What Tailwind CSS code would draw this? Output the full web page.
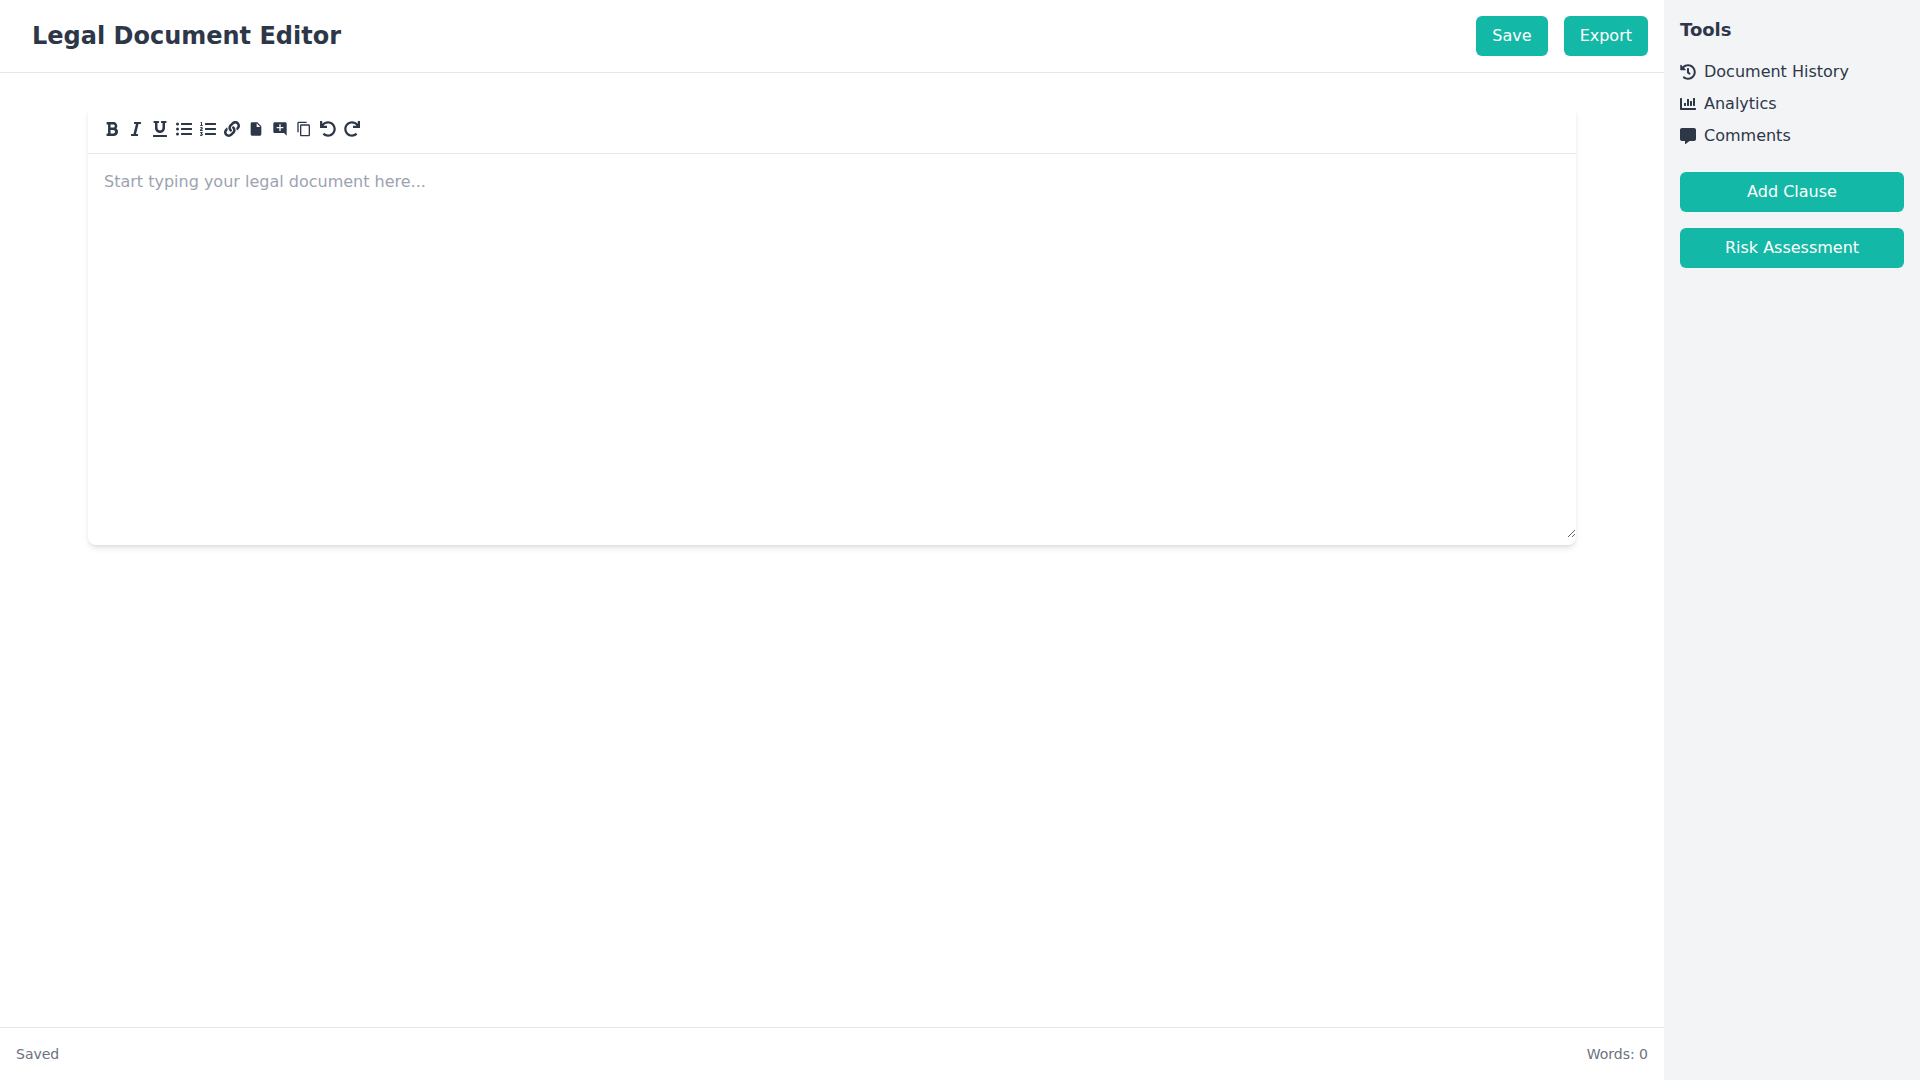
<!DOCTYPE html>
<html lang="en">
  <head>
    <meta charset="UTF-8" />
    <meta name="viewport" content="width=device-width, initial-scale=1.0" />
    <script src="https://cdn.jsdelivr.net/npm/@tailwindcss/browser@4"></script>
    <title>Legal Document Editor</title>
  </head>
  <body class="flex min-h-screen bg-white font-['DejaVu_Sans',sans-serif] text-[#2d3748]">
    <div class="flex min-w-0 flex-1 flex-col">
      <header class="flex items-center justify-between border-b border-[#e5e7eb] p-4">
        <h1 class="ml-4 text-2xl font-bold">Legal Document Editor</h1>
        <div class="flex gap-4">
          <button type="button" class="rounded-md bg-[#14b8a6] px-4 py-2 text-white hover:bg-[#0d9488]">Save</button>
          <button type="button" class="rounded-md bg-[#14b8a6] px-4 py-2 text-white hover:bg-[#0d9488]">Export</button>
        </div>
      </header>

      <main class="mx-auto w-full max-w-[1536px] flex-1 px-6 py-8">
        <div class="rounded-lg bg-white pb-[7px] shadow-md">
          <!-- toolbar -->
          <div class="flex gap-2 border-b border-[#e5e7eb] p-4">
            <button type="button" aria-label="Bold">
              <svg class="size-4" fill="currentColor" viewBox="0 0 384 512"><path d="M333.49 238a122 122 0 0 0 27-65.21C367.87 96.49 308 32 233.42 32H34a16 16 0 0 0-16 16v48a16 16 0 0 0 16 16h31.87v288H34a16 16 0 0 0-16 16v48a16 16 0 0 0 16 16h209.32c70.8 0 134.14-51.75 141-122.4 4.74-48.45-16.39-92.06-50.83-119.6zM145.66 112h87.76a48 48 0 0 1 0 96h-87.76zm87.76 288h-87.76V288h87.76a56 56 0 0 1 0 112z" /></svg>
            </button>
            <button type="button" aria-label="Italic">
              <svg class="size-4" fill="currentColor" viewBox="0 0 320 512"><path d="M320 48v32a16 16 0 0 1-16 16h-62.76l-80 320H208a16 16 0 0 1 16 16v32a16 16 0 0 1-16 16H16a16 16 0 0 1-16-16v-32a16 16 0 0 1 16-16h62.76l80-320H112a16 16 0 0 1-16-16V48a16 16 0 0 1 16-16h192a16 16 0 0 1 16 16z" /></svg>
            </button>
            <button type="button" aria-label="Underline">
              <svg class="size-4" fill="currentColor" viewBox="0 0 448 512"><path d="M32 64h32v160c0 88.22 71.78 160 160 160s160-71.78 160-160V64h32a16 16 0 0 0 16-16V16a16 16 0 0 0-16-16H272a16 16 0 0 0-16 16v32a16 16 0 0 0 16 16h32v160a80 80 0 0 1-160 0V64h32a16 16 0 0 0 16-16V16a16 16 0 0 0-16-16H32a16 16 0 0 0-16 16v32a16 16 0 0 0 16 16zm400 384H16a16 16 0 0 0-16 16v32a16 16 0 0 0 16 16h416a16 16 0 0 0 16-16v-32a16 16 0 0 0-16-16z" /></svg>
            </button>
            <button type="button" aria-label="Bulleted list">
              <svg class="size-4" fill="currentColor" viewBox="0 0 512 512"><path d="M48 48a48 48 0 1 0 48 48 48 48 0 0 0-48-48zm0 160a48 48 0 1 0 48 48 48 48 0 0 0-48-48zm0 160a48 48 0 1 0 48 48 48 48 0 0 0-48-48zm448 16H176a16 16 0 0 0-16 16v32a16 16 0 0 0 16 16h320a16 16 0 0 0 16-16v-32a16 16 0 0 0-16-16zm0-320H176a16 16 0 0 0-16 16v32a16 16 0 0 0 16 16h320a16 16 0 0 0 16-16V80a16 16 0 0 0-16-16zm0 160H176a16 16 0 0 0-16 16v32a16 16 0 0 0 16 16h320a16 16 0 0 0 16-16v-32a16 16 0 0 0-16-16z" /></svg>
            </button>
            <button type="button" aria-label="Numbered list">
              <svg class="size-4" fill="currentColor" viewBox="0 0 512 512"><path d="M61.77 401l17.5-20.15a19.92 19.92 0 0 0 5.07-14.19v-3.31C84.34 356 80.5 352 73 352H16a8 8 0 0 0-8 8v16a8 8 0 0 0 8 8h22.83a157.41 157.41 0 0 0-11 12.31l-5.61 7c-4 5.07-5.25 10.13-2.8 14.88l1.05 1.93c3 5.76 6.29 7.88 12.25 7.88h4.73c10.33 0 15.94 2.44 15.94 9.09 0 4.72-4.2 8.22-14.36 8.22a41.54 41.54 0 0 1-15.47-3.12c-6.49-3.88-11.74-3.5-15.6 3.12l-5.59 9.31c-3.72 6.13-3.19 11.72 2.63 15.94 7.71 4.69 20.38 9.44 37 9.44 34.16 0 48.5-22.75 48.5-44.12-.03-14.38-9.12-29.76-28.73-34.88zM496 224H176a16 16 0 0 0-16 16v32a16 16 0 0 0 16 16h320a16 16 0 0 0 16-16v-32a16 16 0 0 0-16-16zm0-160H176a16 16 0 0 0-16 16v32a16 16 0 0 0 16 16h320a16 16 0 0 0 16-16V80a16 16 0 0 0-16-16zm0 320H176a16 16 0 0 0-16 16v32a16 16 0 0 0 16 16h320a16 16 0 0 0 16-16v-32a16 16 0 0 0-16-16zM16 160h64a8 8 0 0 0 8-8v-16a8 8 0 0 0-8-8H64V40a8 8 0 0 0-8-8H32a8 8 0 0 0-7.14 4.42l-8 16A8 8 0 0 0 24 64h8v64H16a8 8 0 0 0-8 8v16a8 8 0 0 0 8 8zm-3.91 160H80a8 8 0 0 0 8-8v-16a8 8 0 0 0-8-8H41.32c3.29-10.29 48.34-18.68 48.34-56.44 0-29.06-25-39.56-44.47-39.56-21.36 0-33.8 10-40.46 18.75-4.37 5.59-3 10.84 2.8 15.37l8.58 6.88c5.61 4.56 11 2.47 16.12-2.44a13.44 13.44 0 0 1 9.46-3.84c3.33 0 9.28 1.56 9.28 8.75C51 248.19 0 257.31 0 304.59v4C0 316 5.08 320 12.09 320z" /></svg>
            </button>
            <button type="button" aria-label="Insert link">
              <svg class="size-4" fill="currentColor" viewBox="0 0 512 512"><path d="M326.612 185.391c59.747 59.809 58.927 155.698.36 214.59-.11.12-.24.25-.36.37l-67.2 67.2c-59.27 59.27-155.699 59.262-214.96 0-59.27-59.26-59.27-155.7 0-214.96l37.106-37.106c9.84-9.84 26.786-3.3 27.294 10.606.648 17.722 3.826 35.527 9.69 52.721 1.986 5.822.567 12.262-3.783 16.612l-13.087 13.087c-28.026 28.026-28.905 73.66-1.155 101.96 28.024 28.579 74.086 28.749 102.325.51l67.2-67.19c28.191-28.191 28.073-73.757 0-101.83-3.701-3.694-7.429-6.564-10.341-8.569a16.037 16.037 0 0 1-6.947-12.606c-.396-10.567 3.348-21.456 11.698-29.806l21.054-21.055c5.521-5.521 14.182-6.199 20.584-1.731a152.482 152.482 0 0 1 20.522 17.197zM467.547 44.449c-59.261-59.262-155.69-59.27-214.96 0l-67.2 67.2c-.12.12-.25.25-.36.37-58.566 58.892-59.387 154.781.36 214.59a152.454 152.454 0 0 0 20.521 17.196c6.402 4.468 15.064 3.789 20.584-1.731l21.054-21.055c8.35-8.35 12.094-19.239 11.698-29.806a16.037 16.037 0 0 0-6.947-12.606c-2.912-2.005-6.64-4.875-10.341-8.569-28.073-28.073-28.191-73.639 0-101.83l67.2-67.19c28.239-28.239 74.3-28.069 102.325.51 27.75 28.3 26.872 73.934-1.155 101.96l-13.087 13.087c-4.35 4.35-5.769 10.79-3.783 16.612 5.864 17.194 9.042 34.999 9.69 52.721.509 13.906 17.454 20.446 27.294 10.606l37.106-37.106c59.271-59.259 59.271-155.699.001-214.959z" /></svg>
            </button>
            <button type="button" aria-label="Insert file">
              <svg class="size-4" fill="currentColor" viewBox="0 0 24 24"><path d="M6 2c-1.1 0-1.99.9-1.99 2L4 20c0 1.1.89 2 1.99 2H18c1.1 0 2-.9 2-2V8l-6-6H6zm7 7V3.5L18.5 9H13z" /></svg>
            </button>
            <button type="button" aria-label="Add comment">
              <svg class="size-4" fill="currentColor" viewBox="0 0 24 24"><path d="M22 4c0-1.1-.9-2-2-2H4c-1.1 0-1.99.9-1.99 2L2 16c0 1.1.9 2 2 2h14l4 4V4zm-5 7h-4v4h-2v-4H7V9h4V5h2v4h4v2z" /></svg>
            </button>
            <button type="button" aria-label="Copy">
              <svg class="size-4" fill="currentColor" viewBox="0 0 24 24"><path d="M16 1H4c-1.1 0-2 .9-2 2v14h2V3h12V1zm3 4H8c-1.1 0-2 .9-2 2v14c0 1.1.9 2 2 2h11c1.1 0 2-.9 2-2V7c0-1.1-.9-2-2-2zm0 16H8V7h11v14z" /></svg>
            </button>
            <button type="button" aria-label="Undo">
              <svg class="size-4" fill="currentColor" viewBox="0 0 512 512"><path d="M212.333 224.333H12c-6.627 0-12-5.373-12-12V12C0 5.373 5.373 0 12 0h48c6.627 0 12 5.373 12 12v78.112C117.773 39.279 184.26 7.47 258.175 8.007c136.906.994 246.448 111.623 246.157 248.532C504.041 393.258 393.12 504 256.333 504c-64.089 0-122.496-24.313-166.51-64.215-5.099-4.622-5.334-12.554-.467-17.42l33.967-33.967c4.474-4.474 11.662-4.717 16.401-.525C170.76 415.336 211.58 432 256.333 432c97.268 0 176-78.716 176-176 0-97.267-78.716-176-176-176-58.496 0-110.28 28.476-142.274 72.333h98.274c6.627 0 12 5.373 12 12v48c0 6.627-5.373 12-12 12z" /></svg>
            </button>
            <button type="button" aria-label="Redo">
              <svg class="size-4 -scale-x-100" fill="currentColor" viewBox="0 0 512 512"><path d="M212.333 224.333H12c-6.627 0-12-5.373-12-12V12C0 5.373 5.373 0 12 0h48c6.627 0 12 5.373 12 12v78.112C117.773 39.279 184.26 7.47 258.175 8.007c136.906.994 246.448 111.623 246.157 248.532C504.041 393.258 393.12 504 256.333 504c-64.089 0-122.496-24.313-166.51-64.215-5.099-4.622-5.334-12.554-.467-17.42l33.967-33.967c4.474-4.474 11.662-4.717 16.401-.525C170.76 415.336 211.58 432 256.333 432c97.268 0 176-78.716 176-176 0-97.267-78.716-176-176-176-58.496 0-110.28 28.476-142.274 72.333h98.274c6.627 0 12 5.373 12 12v48c0 6.627-5.373 12-12 12z" /></svg>
            </button>
          </div>
          <textarea
            id="editor"
            aria-label="Document text"
            class="block h-96 w-full resize p-4 placeholder:text-[#9ca3af] focus:outline-none"
            placeholder="Start typing your legal document here..."
          ></textarea>
        </div>
      </main>

      <footer class="flex items-center justify-between border-t border-[#e5e7eb] p-4 text-sm text-[#6b7280]">
        <span>Saved</span>
        <span id="word-count">Words: 0</span>
      </footer>
    </div>

    <!-- sidebar -->
    <aside class="w-64 shrink-0 bg-[#f3f4f6] p-4">
      <h2 class="mb-4 text-lg font-bold">Tools</h2>
      <ul class="mb-6 space-y-2">
        <li>
          <a href="#history" class="flex items-center gap-2">
            <svg class="size-4" fill="currentColor" viewBox="0 0 512 512"><path d="M504 255.531c.253 136.64-111.18 248.372-247.82 248.468-59.015.042-113.223-20.53-155.822-54.911-11.077-8.94-11.905-25.541-1.839-35.607l11.267-11.267c8.609-8.609 22.353-9.551 31.891-1.984C173.062 425.135 212.781 440 256 440c101.705 0 184-82.311 184-184 0-101.705-82.311-184-184-184-48.814 0-93.149 18.969-126.068 49.932l50.754 50.754c10.08 10.08 2.941 27.314-11.313 27.314H24c-8.837 0-16-7.163-16-16V38.627c0-14.254 17.234-21.393 27.314-11.314l49.372 49.372C129.209 34.136 189.552 8 256 8c136.81 0 247.747 110.78 248 247.531zm-180.912 78.784l9.823-12.63c8.138-10.463 6.253-25.542-4.21-33.679L288 256.349V152c0-13.255-10.745-24-24-24h-16c-13.255 0-24 10.745-24 24v135.651l65.409 50.874c10.463 8.137 25.541 6.253 33.679-4.21z" /></svg>
            Document History
          </a>
        </li>
        <li>
          <a href="#analytics" class="flex items-center gap-2">
            <svg class="size-4" fill="currentColor" viewBox="0 0 512 512"><path d="M332.8 320h38.4c6.4 0 12.8-6.4 12.8-12.8V172.8c0-6.4-6.4-12.8-12.8-12.8h-38.4c-6.4 0-12.8 6.4-12.8 12.8v134.4c0 6.4 6.4 12.8 12.8 12.8zm96 0h38.4c6.4 0 12.8-6.4 12.8-12.8V76.8c0-6.4-6.4-12.8-12.8-12.8h-38.4c-6.4 0-12.8 6.4-12.8 12.8v230.4c0 6.4 6.4 12.8 12.8 12.8zm-288 0h38.4c6.4 0 12.8-6.4 12.8-12.8v-70.4c0-6.4-6.4-12.8-12.8-12.8h-38.4c-6.4 0-12.8 6.4-12.8 12.8v70.4c0 6.4 6.4 12.8 12.8 12.8zm96 0h38.4c6.4 0 12.8-6.4 12.8-12.8V108.8c0-6.4-6.4-12.8-12.8-12.8h-38.4c-6.4 0-12.8 6.4-12.8 12.8v198.4c0 6.4 6.4 12.8 12.8 12.8zM496 384H64V80c0-8.84-7.16-16-16-16H16C7.16 64 0 71.16 0 80v336c0 17.67 14.33 32 32 32h464c8.84 0 16-7.16 16-16v-32c0-8.84-7.16-16-16-16z" /></svg>
            Analytics
          </a>
        </li>
        <li>
          <a href="#comments" class="flex items-center gap-2">
            <svg class="size-4" fill="currentColor" viewBox="0 0 512 512"><path d="M448 0H64C28.7 0 0 28.7 0 64v288c0 35.3 28.7 64 64 64h96v84c0 9.8 11.2 15.5 19.1 9.7L304 416h144c35.3 0 64-28.7 64-64V64c0-35.3-28.7-64-64-64z" /></svg>
            Comments
          </a>
        </li>
      </ul>
      <div class="flex flex-col gap-4">
        <button type="button" class="w-full rounded-md bg-[#14b8a6] px-4 py-2 text-white hover:bg-[#0d9488]">Add Clause</button>
        <button type="button" class="w-full rounded-md bg-[#14b8a6] px-4 py-2 text-white hover:bg-[#0d9488]">Risk Assessment</button>
      </div>
    </aside>

    <script>
      const editor = document.querySelector("#editor");

      // Update the word count while typing
      editor.addEventListener("input", () => {
        const words = editor.value.trim().split(/\s+/).filter(Boolean);
        document.querySelector("#word-count").textContent = `Words: ${words.length}`;
      });
    </script>
  </body>
</html>
